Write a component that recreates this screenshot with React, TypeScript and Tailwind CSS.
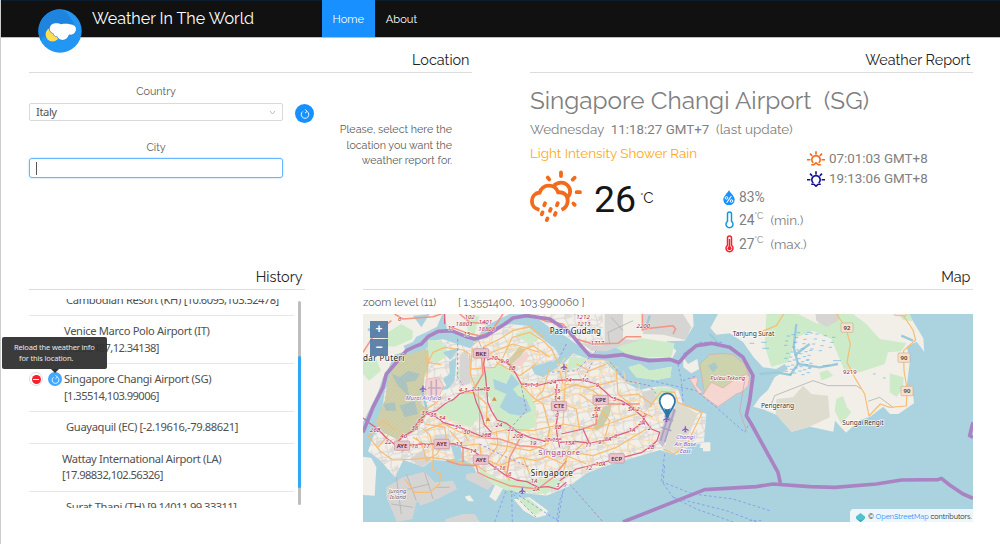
import React from "react";

const raleway = "font-['Raleway','Lato',sans-serif]";
const noto = "font-['Noto_Sans',sans-serif]";
const roboto = "font-['Roboto',sans-serif]";

function Logo() {
  return (
    <svg viewBox="0 0 44 44" className="h-11 w-11">
      <circle cx="22" cy="22" r="21.7" fill="#2196f3" />
      <path d="M22 .3 28 3 36 14 24 26 15 32 5 27 3 32A21.7 21.7 0 0 1 22 .3Z" fill="#1e84dd" />
      <circle cx="14.500" cy="25.500" r="6.900" fill="#ffdd55" />
      <path
        d="M16 14.500c3-.8 5.500 0 7 .7 4-.9 8-.5 10 .2 4 .3 5.600 3 4.800 6-1 3.400-3.800 4.800-6.800 4.200-1 3.400-3.400 5.400-6.500 5.400-2.700 0-4.300-1.600-5.200-3.400-2-.2-3.400-1.400-3.800-3.200-2.800-1-4.200-3-3.700-5.600.3-2.200 2-3.700 4.200-4.300Z"
        fill="#fff"
        stroke="#2089e4"
        strokeWidth="1.200"
        paintOrder="stroke"
      />
    </svg>
  );
}

function Reload({ size }: { size: number }) {
  return (
    <svg width={size} height={size} viewBox="0 0 12 12" fill="none" stroke="#fff" strokeWidth="1.100">
      <path d="M3.400 3A4.500 4.500 0 1 0 8.600 3" />
      <path d="M6.200.4 8.600 2.900 6 4.800" />
    </svg>
  );
}

function RainIcon() {
  return (
    <svg viewBox="0 0 52 52" className="h-[52px] w-[52px]" fill="none" stroke="#f26a1b" strokeWidth="3.800" strokeLinecap="round">
      <path d="M9.500 39.800C4.800 38.800 1.900 35.400 1.900 31.200c0-4.600 3.200-8.200 7.800-8.700a9.600 9.600 0 0 1 18.400-.2c6.500-.6 10.300 4.200 9.600 9.200-.6 4.400-3.600 7.300-6.200 8.300" strokeLinecap="butt" />
      <path d="M24 15.500c4-3.800 10-4 13.500-.2 4 4.200 3.500 9.600-1.500 13" strokeLinecap="butt" />
      <path d="M31 2.400v3.600M17.700 7.600l1.600 1.800M42.700 9.600l2-1.900M46.600 22.200h3.400M43.400 33.500l1.300 1.300" />
      <path d="M15 33.300l-.7 1.900M27.700 33.300l-.7 1.900M20.700 39l-.7 1.900M12.500 42.400l-.7 1.900M25.600 43l-.7 1.900M17.500 48.400l-.7 1.700" />
    </svg>
  );
}

function HorizonSun({ set = false }: { set?: boolean }) {
  return (
    <svg viewBox="0 0 18 17" className="h-[17px] w-[18px] shrink-0" fill="none" stroke={set ? "#0f0f90" : "#f26a1b"} strokeWidth="1.600">
      <path d="M0 8.800h3.400M14.600 8.800H18M9 .3v3.200M3 2.600l2.200 2.300M15 2.600l-2.200 2.300M6.300 12A4.200 4.200 0 1 1 11.700 12" />
      <path d={set ? "M4.200 13.200h2.600l2.200 2 2.200-2h2.600" : "M4.200 13.800h2.600l2.200-2 2.200 2h2.600"} />
    </svg>
  );
}

function Drop() {
  return (
    <svg viewBox="0 0 12 15" className="h-[15px] w-3">
      <path d="M6 .2C7.500 3 11.700 6.300 11.700 9.600a5.500 5.500 0 0 1-11.400 0C.3 6.300 4.500 3 6 .2Z" fill="#1890ff" />
      <path d="m8.300 6-4.600 6.800" stroke="#fff" strokeWidth="1.100" />
      <circle cx="3.500" cy="7.900" r="1.300" fill="none" stroke="#fff" />
      <circle cx="8.500" cy="11" r="1.300" fill="none" stroke="#fff" />
    </svg>
  );
}

function Thermo({ hot = false }: { hot?: boolean }) {
  const c = hot ? "#f5222d" : "#1296db";
  return (
    <svg viewBox="0 0 9 18" className="h-[18px] w-[9px]" fill="none" stroke={c} strokeWidth="1.500">
      <path d="M2.500 10.300V3a2 2 0 0 1 4 0v7.300a3.500 3.500 0 1 1-4 0Z" />
      {hot && <path d="M4.500 4v8" />}
      {hot && <circle cx="4.500" cy="13.200" r="2" fill={c} stroke="none" />}
    </svg>
  );
}

function Heading({ children }: { children: React.ReactNode }) {
  return (
    <h2 className={`${raleway} h-[27px] border-b border-[#dcdcdc] pr-[2.500px] text-right text-[14.400px] leading-[27px] text-[#222]`}>
      {children}
    </h2>
  );
}

const landPaths = [
  "M0 0H238L222 38 190 55 160 68 150 84 122 95 128 112 95 122 78 160 60 190 45 235 0 325Z",
  "M245 0 252 45 285 62 345 72 362 40 395 22 440 0Z",
  "M500 0 530 18 562 42 610 68 640 90 690 118 741 90 840 130 925 138 940 110 910 82 965 80 992 35 990 0Z",
  "M796 160 830 150 860 170 926 158 922 190 880 198 820 190Z",
  "M1065 0 1042 42 1060 62 1100 58 1140 84 1172 130 1200 160 1240 165 1265 150 1275 165 1235 190 1215 228 1191 250 1171 278 1200 286 1241 303 1286 353 1341 338 1411 353 1416 320 1449 356 1491 318 1521 308 1561 278 1581 300 1606 300 1653 268 1651 248 1631 218 1641 138 1631 98 1661 83 1684 113 1681 73 1651 23 1636 0Z",
  "M186 108 210 80 240 76 291 93 321 103 350 78 391 53 441 30 491 35 536 73 575 103 590 128 560 150 601 150 631 118 681 138 721 138 751 168 791 208 831 228 855 222 880 218 911 216 946 228 961 273 1030 300 1022 390 990 390 941 423 891 408 821 428 721 458 671 478 621 515 591 528 551 545 491 538 431 528 381 508 341 478 330 455 291 428 250 440 211 438 181 458 121 438 96 490 51 438 15 412 31 368 51 328 66 228 111 158 141 128Z",
  "M0 428 25 432 40 460 35 545 0 543Z",
  "M379 548 403 500 425 515 398 562Z",
  "M305 548 320 544 333 562 316 562Z",
  "M452 556 500 550 555 590 548 604 520 612 482 590Z",
  "M961 130 975 150 1003 135 1008 165 985 178 961 160Z",
  "M1015 385H1042V412H1020V402H1010Z",
];
const greens = [
  "M70 58 115 30 150 50 148 75 95 98 62 95Z",
  "M0 135 38 130 54 170 18 200 0 180Z",
  "M370 165 415 150 460 190 490 225 520 280 515 340 460 360 405 335 380 250 325 225 340 190Z",
  "M218 295 280 250 335 230 360 290 325 340 270 320Z",
  "M280 180 296 140 318 180 300 205Z",
  "M310 5 350 5 335 60 315 65Z",
  "M195 78 235 80 260 120 220 148 195 130Z",
  "M741 90 800 82 835 72 935 88 925 130 850 130 790 120Z",
  "M796 160 830 150 860 170 926 158 922 190 880 198 820 190Z",
  "M1210 0H1305L1365 30 1370 0H1470L1510 30 1550 75 1630 88 1615 112 1575 115 1565 150 1490 175 1445 170 1405 75 1350 50 1300 70 1275 145 1225 158 1205 95Z",
  "M1605 0H1640L1650 22 1620 18Z",
  "M1420 255 1440 245 1452 280 1465 295 1435 330 1415 290Z",
  "M1370 175 1395 168 1410 185 1375 200Z",
  "M1580 178 1622 190 1620 225 1600 248 1580 235Z",
  "M620 128 670 132 660 155 610 170Z",
  "M345 465 410 495 480 500 570 492 605 500 550 540 430 528 380 505Z",
  "M465 550 500 555 540 590 515 604 488 580Z",
  "M870 225 920 220 930 250 900 262 870 258Z",
  "M455 60 505 45 525 75 500 92Z",
];
const lakes = [
  "M390 195 430 210 445 180 470 210 450 225 465 245 490 255 505 290 475 305 440 300 410 280 430 240 395 225Z",
  "M258 145 280 130 275 200 255 225 225 230 250 215 240 195 260 180Z",
  "M262 392 290 390 300 430 278 440Z",
  "M240 115 290 100 262 138Z",
  "M505 160 565 140 590 155 540 190 515 180Z",
  "M150 5 200 0 175 40Z",
  "M120 260 155 270 140 300Z",
];
const industrial = [
  "M725 0H780V75L830 80 790 90 730 112 685 110 660 90 725 88Z",
  "M840 0H960L985 40 968 78 900 62 840 60Z",
  "M290 125 312 108 325 180 320 210 292 215Z",
  "M215 362 258 360 262 410 218 410Z",
  "M140 435 175 410 208 440 175 460Z",
  "M70 520 120 490 185 473 215 505 270 500 282 525 225 555 160 565 148 615 102 624 70 550Z",
  "M165 550 205 540 215 560 170 575Z",
  "M310 480 345 475 390 510 375 528 308 495Z",
  "M1358 0H1430L1425 20 1390 38 1360 20Z",
  "M250 615 300 600 335 600 350 624H245Z",
  "M835 235 870 228 880 255 850 290Z",
];
const orangeRoads = [
  "M15 365 50 410 90 438 145 436 205 430 270 440 300 447 340 452 370 475",
  "M180 345 200 362 210 400 210 470 232 478 230 510 200 535 155 535 125 495",
  "M180 320 186 288 215 270 240 250 M186 108 192 145 235 152",
  "M192 190 194 148 210 115 245 100 300 108 320 120 322 165 395 160 420 130 448 70 500 55 540 80 565 105 590 155",
  "M360 100 410 75 450 50 500 38 545 72 M375 120 450 90 530 115 M455 120 510 95 560 130 M400 145 470 185 520 150",
  "M340 230 322 180 328 100 M280 240 330 235 372 270 370 330",
  "M185 350 240 328 285 352 345 370 395 355 440 345 510 350 600 330 690 345 820 300",
  "M150 370 190 395 M185 330 245 340 250 370 222 420 190 440 180 400 160 370 M260 350 300 395 350 390 355 430 410 455 470 430 520 440 600 410 690 425 760 400 850 345",
  "M400 350 405 395 370 440 M440 350 430 410 400 450 M300 350 315 380 M560 340 555 390 500 410 450 400 380 388 M510 265 560 245 640 210 690 230",
  "M475 212 510 250 540 270 560 345 545 400 M600 270 640 285 650 350 M650 240 700 275 740 320 720 390 M690 230 735 265",
  "M590 170 600 210 680 220 760 200 M640 150 680 170 730 150 M610 150 600 330 M560 160 540 230 520 250",
  "M760 170 765 240 820 285 870 310 M770 245 825 240 865 270 M860 280 885 245 895 232 935 235 945 265 1018 295 975 385 935 420 900 405",
  "M600 420 670 450 M600 440 660 390 M535 420 600 450 M480 430 500 480 M420 460 440 500 M620 395 600 480",
  "M1191 55 1240 35 1262 0 M1420 0 1448 40 1462 90 1452 145 1475 190 1505 240 1518 306 1552 270 1580 280 1630 276 1632 225 1623 170 1622 110 1658 78 1650 48 1618 0",
  "M15 370 60 320 100 350 M45 400 75 365 M115 415 145 390",
];
const motorways = [
  "M0 312 20 328 45 345 70 372 95 391 135 394 190 389 240 391 272 389 300 400 328 408 350 425 370 442 395 460 425 482 460 498 492 503 525 520 555 518 585 526 610 505",
  "M95 391 120 368 150 350 166 322 190 300 220 290 245 270 272 256 292 238 330 228 370 225",
  "M362 100 366 125 362 150 368 190 372 235 374 265 385 290 402 318 430 328 460 352 500 370 540 380 595 375",
  "M372 138 395 130 440 152 458 178 475 210 530 213 580 200 620 197 660 198 700 210 725 232 745 250 775 260 800 275 835 305 865 345 890 355 882 380 865 395 835 416 800 425 700 450 640 465 590 500",
  "M582 210 578 255 585 300 579 335 582 360 590 400 M330 230 340 265 355 300 364 332 385 355 M190 300 215 306 240 325 290 340 320 352 350 365 385 360",
  "M590 385 635 382 680 387 722 380 760 365 800 352 835 330 850 300 M595 360 660 345 680 390 M245 0V30",
];
const coralRoads = [
  "M355 72 390 45 420 0 M260 38 315 58 350 65 400 50 M290 0 320 25 375 30 M95 0 120 15 210 8 235 0",
  "M0 115 35 60 85 20 M490 0 550 22 600 30 640 75 690 90 765 88 790 68 835 68 M838 0V50 M840 45 930 35 938 45 930 60",
  "M355 120 360 180 330 230 M350 370 410 375 470 395 530 400 600 430 M300 400 300 445",
  "M470 375 440 430 430 490 M250 440 290 452 340 455 345 475 375 490 440 515 525 525 570 490 610 440 M700 275 700 330 660 345 M735 270 830 270",
];
const greyRoads = [
  "M1225 270 1235 245 1350 200 1395 215 1480 215 1495 225 M1515 262 1550 250 1590 280",
  "M810 20 735 55 740 90 M745 10 780 50",
  "M100 490 115 600 M75 540 200 510 M130 480 160 560 M185 475 210 555 M85 570 150 580 M220 520 260 520",
  "M345 75 355 100 M345 225 350 300 350 370",
];
const boundaries = [
  "M0 355 30 280 60 220 70 180 105 140 130 110 155 98 175 90 195 68 225 52 265 50 310 68 335 75 370 65 425 30 450 12 490 5 560 15 620 55 645 85 680 125 725 128 780 122 815 132 860 140 920 136 948 146 970 120 1000 95 1045 88 1100 100 1140 130 1170 185 1160 260 1150 305 1165 330 1245 475 1252 507",
  "M780 624 1025 527 1180 518 1230 510 1340 518 1415 520 1540 510 1615 498 1725 497 1735 493 1760 513 1800 540 1830 553",
  "M1830 325 1820 365 1830 370",
];
const ferries = [
  "M395 624 430 528 M448 624 446 530 590 624 M440 530 520 610 M600 530 585 624 M610 510 590 560 580 624",
  "M905 420 895 500 930 550 1000 585 1110 624 M905 455 900 505 990 540 1110 555 1220 590 M930 550 1090 590 1180 624",
  "M865 200 1000 230 1060 280 1145 355 1155 335 M945 150 955 200 960 262 M960 200 1000 185 M960 120 1010 85 1080 85",
  "M1195 620H1160 M700 110 640 170 560 175",
];
const paths = [
  "M284 75V190L300 215 M741 145 790 200 860 215 880 240 M620 510 720 624 M688 145 665 190 M475 215 490 290 440 345 M610 90 590 130 M350 390 420 425 500 460",
];
const blueSwamp: number[][] = [];
for (let i = 0; i < 60; i++) {
  const x = 1262 + ((i * 37) % 80) + (i % 5 === 0 ? 70 : 0);
  const y = 55 + ((i * 53) % 130);
  blueSwamp.push([x, y]);
}
const roadNums: [number, number, string][] = [
  [110, 22, "6"], [320, 16, "102"], [303, 37, "18803"], [367, 29, "1401"], [371, 50, "18808"], [264, 49, "17"], [311, 67, "15"],
  [394, 139, "10"], [425, 148, "9-9"], [447, 167, "8B"], [300, 233, "4-3"], [338, 232, "2-1"], [370, 230, "1B"], [258, 264, "5"],
  [185, 304, "35"], [211, 308, "35"], [237, 319, "34"], [172, 326, "36"], [155, 347, "38"], [122, 371, "40"], [37, 353, "26B"], [76, 389, "22"],
  [155, 401, "18"], [190, 403, "17"], [288, 397, "13"], [285, 346, "31"], [311, 360, "30"], [369, 370, "26B"], [408, 339, "24"], [444, 352, "22"],
  [465, 373, "20B"], [510, 392, "19"], [330, 418, "14"], [410, 469, "8-18"], [440, 485, "6"], [513, 507, "1A"], [520, 530, "2A"], [585, 345, "8B"],
  [505, 220, "5-1-3"], [570, 211, "24"], [616, 204, "14"], [666, 205, "10"], [703, 220, "9"], [582, 236, "15"], [582, 257, "14"], [755, 261, "5"],
  [781, 275, "4"], [812, 290, "3A-2"], [836, 332, "2A"], [807, 353, "1A"], [758, 372, "6"], [735, 380, "8A"], [676, 398, "11"], [710, 391, "9"],
  [712, 456, "10A"], [677, 468, "12"], [864, 405, "2B"], [702, 292, "3B"], [695, 312, "3A"], [620, 394, "15A"], [843, 310, "2"], [859, 347, "2"],
  [564, 384, "27-15"], [662, 37, "1213"], [660, 16, "1212"], [703, 93, "1717"], [841, 43, "2200"], [582, 308, "0"], [585, 520, "3"],
];
const badges: [number, number, string][] = [
  [354, 118, "BKE"], [588, 276, "CTE"], [117, 395, "AYE"], [236, 390, "AYE"], [354, 437, "AYE"], [713, 258, "KPE"], [761, 433, "ECP"],
];
const shields: [number, number, string][] = [[1452, 41, "92"], [1623, 131, "90"], [1632, 231, "90"]];
const planes = [[180, 223], [478, 530], [603, 158], [910, 314], [967, 345]];

function Lines({ d, color, width, dash }: { d: string[]; color: string; width: number; dash?: string }) {
  return (
    <g fill="none" stroke={color} strokeWidth={width} strokeDasharray={dash} strokeLinejoin="round">
      {d.map((p) => <path key={p} d={p} />)}
    </g>
  );
}

function WorldMap() {
  return (
    <svg viewBox="0 0 1830 624" className="block h-[208px] w-[610px] bg-[#aad3df]" preserveAspectRatio="none">
      <defs>
        <pattern id="streets" width="64" height="58" patternUnits="userSpaceOnUse" patternTransform="rotate(-14)">
          <path d="M0 12 22 8 38 15 64 12M0 40 18 45 42 38 64 40M12 0 16 25 8 40 12 58M34 0 38 15 33 30 42 38 34 58M54 0 50 22 64 26M0 26 16 25 33 30 50 22" fill="none" stroke="#bbb8b5" strokeWidth="1.400" />
          <path d="M8 32h20v10H10zM42 4h12v14H43z" fill="#dedbd6" />
        </pattern>
        <pattern id="arterials" width="118" height="102" patternUnits="userSpaceOnUse" patternTransform="rotate(9)">
          <path d="M0 30 35 24 60 40 118 30M30 0 35 24 20 55 30 102M60 40 75 72 118 80M75 72 20 55M0 80 22 72M92 0 88 35 100 75" fill="none" stroke="#fad9a2" strokeWidth="3" />
        </pattern>
        <pattern id="hatch" width="9" height="9" patternUnits="userSpaceOnUse" patternTransform="rotate(45)">
          <path d="M0 0V9" stroke="#b9ae91" strokeWidth="1.500" />
        </pattern>
      </defs>
      <g fill="#f2efe9">{landPaths.map((p) => <path key={p} d={p} />)}</g>
      <path d={landPaths[5]} fill="url(#streets)" />
      <path d="M330 60 500 35 590 130 740 140 860 230 940 230 900 400 700 455 590 520 380 500 330 450 170 430 180 330 280 230 330 220Z" fill="url(#arterials)" />
      <path d="M500 0H720V100L690 115 610 65Z" fill="url(#streets)" />
      <g fill="#cdebc9">{greens.map((p) => <path key={p} d={p} />)}</g>
      <g fill="#d6d5d3">{industrial.map((p) => <path key={p} d={p} />)}</g>
      <g fill="#aad3df">{lakes.map((p) => <path key={p} d={p} />)}</g>
      <path d="M100 130 195 105 200 145 185 185 175 270 200 290 160 350 105 378 60 355 38 325 65 260 75 200Z" fill="#cfd0a9" />
      <path d="M85 178 110 190 135 170 170 180 158 200 130 205 140 250 105 215ZM60 270 95 265 100 290 70 290ZM110 275 155 260 165 300 125 310Z" fill="#abc5c3" />
      <path d="M100 130 195 105 200 145 185 185 175 270 200 290 160 350 105 378 60 355 38 325 65 260 75 200Z" fill="url(#hatch)" opacity=".7" />
      <path d="M190 195 225 190 242 215 230 245 215 265 185 250Z" fill="#f3d3d0" stroke="#e6aaa7" strokeWidth="2" />
      <path d="M205 200V255M220 195V250M195 222H235" stroke="#c3abc5" strokeWidth="5" />
      <path d="M427 148 470 98 488 108 445 160Z" fill="#d0cda8" />
      <path d="M445 150 490 112 500 125 475 155Z" fill="#f3d3d0" />
      <path d="M693 340 720 280 745 270 740 300 722 335 700 350Z" fill="#c9cda9" />
      <path d="M1240 255 1290 250 1320 215 1345 240 1395 245 1400 310 1340 338 1286 353 1238 300Z" fill="#dddccf" />
      <path d="M1018 195 1010 150 1040 122 1080 118 1110 122 1145 150 1160 190 1155 215 1120 220 1062 260 1022 225Z" fill="#cdd3ac" stroke="#d8aaa4" strokeWidth="2" />
      <path d="M980 195 1005 190 1000 215 1020 235 1008 240ZM1018 245 1045 205 1080 222 1110 200 1150 180 1160 190 1155 215 1140 232 1120 240 1065 278Z" fill="#f6d6d0" stroke="#e2aaa2" strokeWidth="2" />
      <path d="M1035 155 1055 145 1065 160 1050 175Z" fill="#aac9c9" />
      <path d="M940 260 1005 300 950 420 905 405Z" fill="#dddccf" />
      <path d="M885 385 920 270 940 290 900 400Z" fill="#c7c1d2" />
      <path d="M893 380 925 275M905 385 935 285M895 340 925 350M905 305 930 320" stroke="#aaa1c2" strokeWidth="5" />
      <Lines d={greyRoads} color="#b5b3b3" width={2.500} />
      <path d="M1190 180 1240 175 1282 183 1305 150 1292 100 1300 30M1305 150 1370 160 1425 150M1300 120 1340 90M1040 60 1080 100M1615 65 1650 80M860 5 850 40M175 220 195 300M15 45 40 60" fill="none" stroke="#9bcbd9" strokeWidth="7" />
      <g stroke="#66b2e8" strokeWidth="2">
        {blueSwamp.map(([x, y], i) => <path key={i} d={`M${x} ${y}h10`} />)}
        <path d="M1195 85h16M1198 103h20M1160 88h14M1380 155h20M1410 140h24M1530 180h8M1560 192h8" />
      </g>
      <Lines d={orangeRoads} color="#f8bd72" width={3.600} />
      <Lines d={coralRoads} color="#f39581" width={4.500} />
      <Lines d={motorways} color="#e0607f" width={3.800} />
      <Lines d={ferries} color="#7d8cee" width={2.200} dash="8 7" />
      <Lines d={paths} color="#a77fc4" width={2.500} dash="8 6" />
      <Lines d={boundaries} color="#aa84c2" width={11} />
      <path d="M1145 200 1130 290 1150 350" fill="none" stroke="#ce9fae" strokeWidth="2" />
      <g fill="#d38a4a"><path d="m387 260 7-12 7 12zM368 321l7-12 7 12z" /></g>
      <g className="font-['Noto_Sans',sans-serif] italic" fontSize="18.500" fill="#b1213c" stroke="#fff" strokeOpacity=".8" strokeWidth="3" paintOrder="stroke" textAnchor="middle">
        {roadNums.map(([x, y, t], i) => <text key={i} x={x} y={y}>{t}</text>)}
      </g>
      <g className="font-['Noto_Sans',sans-serif]" fontSize="18" fontWeight="600" textAnchor="middle">
        {badges.map(([x, y, t], i) => (
          <g key={i}>
            <rect x={x - 23} y={y - 14} width="46" height="28" rx="4" fill="#eac4ce" stroke="#c9909d" strokeWidth="2" />
            <text x={x} y={y + 7} fill="#5c2632">{t}</text>
          </g>
        ))}
        <rect x="1594" y="-10" width="36" height="15" rx="3" fill="#f5e1cd" stroke="#cfae91" strokeWidth="2" />
        {shields.map(([x, y, t], i) => (
          <g key={i}>
            <rect x={x - 18} y={y - 14} width="36" height="28" rx="3" fill="#f5e1cd" stroke="#cfae91" strokeWidth="2" />
            <text x={x} y={y + 7} fill="#5b3b2b">{t}</text>
          </g>
        ))}
      </g>
      <g fill="#8461c4">
        {planes.map(([x, y], i) => (
          <path key={i} d="M0-10 2-7V-2L10 3V6L2 3V7L5 10H-5L-2 7V3L-10 6V3L-2-2V-7Z" transform={`translate(${x} ${y})`} />
        ))}
      </g>
      <g className="font-['Noto_Sans',sans-serif]" stroke="#fff" strokeOpacity=".8" strokeWidth="4" paintOrder="stroke">
        <g fill="#222" fontSize="24">
          <text x="0" y="141" textLength="124">dar Puteri</text>
          <text x="560" y="60" textLength="154">Pasir Gudang</text>
          <text x="503" y="485" textLength="126">Singapore</text>
        </g>
        <g fill="#333" fontSize="20">
          <text x="1109" y="65" textLength="125">Tanjung Surat</text>
          <text x="1194" y="283" textLength="99">Pengerang</text>
          <text x="1438" y="332" textLength="124">Sungai Rengit</text>
        </g>
        <text x="526" y="422" fontSize="23" fill="#93498e" textLength="125">Singapore</text>
        <g fontSize="18" fontStyle="italic">
          <text x="128" y="259" fill="#8461c4" textLength="106">Murai Airfield</text>
          <g fill="#7b6178"><text x="77" y="537">Jurong</text><text x="80" y="556">Island</text></g>
          <g fill="#8461c4" textAnchor="middle"><text x="967" y="376">Changi</text><text x="967" y="397">Air Base</text><text x="967" y="418">East</text></g>
          <text x="1042" y="199" fill="#a5324a" textLength="105">Pulau Tekong</text>
        </g>
        <text x="1440" y="179" fontSize="18" fill="#a02335">9219</text>
      </g>
      <path d="M913 312C907 286 890 281 890 261A23 23 0 0 1 936 261C936 281 919 286 913 312Z" fill="#fff" stroke="#2978a5" strokeWidth="5" />
      <path d="M903 282Q913 290 923 282L913 312Z" fill="#2978a5" />
    </svg>
  );
}

function Row({ children, pad = "pl-[35px]" }: { children: React.ReactNode; pad?: string }) {
  return <li className={`border-b border-[#e8e8e8] py-[7px] leading-[16.500px] ${pad}`}>{children}</li>;
}

function Coords({ children }: { children: React.ReactNode }) {
  return <span className="tracking-[-0.58px]">{children}</span>;
}

export default function App() {
  return (
    <div className="flex h-[544px] w-[1000px] flex-col overflow-hidden border-l border-[#ccc] bg-white">
      <header className={`${raleway} flex h-[38px] shrink-0 border-b border-[#8fcaff] bg-[#111] text-white shadow-[inset_0_1px_0_#0b1d2c]`}>
        <div className="ml-[36.500px] mt-[8.500px] h-11 w-11 shrink-0">
          <Logo />
        </div>
        <div className="ml-[10.500px] w-[230px] whitespace-nowrap text-[16.100px] leading-[38px]">Weather In The World</div>
        <nav className="flex text-[11.100px] leading-[39px]">
          <a className="h-[37px] w-[52.500px] bg-[#1890ff] text-center">Home</a>
          <a className="h-[37px] w-[54px] text-center">About</a>
        </nav>
      </header>

      <main className="pl-7 pt-[8px]">
        <div className="flex h-[217px] gap-[58px]">
          <section className="w-[443px]">
            <Heading>Location</Heading>
            <div className={`${raleway} flex text-[10.800px] text-[#5a5a5a]`}>
              <div className="w-[254px] pt-[10px]">
                <div className="h-5 text-center leading-[17px]">Country</div>
                <div className={`${noto} flex h-[18px] items-center justify-between rounded-[2px] border border-[#d9d9d9] px-[6px] text-[11.300px] tracking-[-0.45px] text-[#555]`}>
                  Italy
                  <svg width="7" height="5" viewBox="0 0 7 5" fill="none" stroke="#bbb"><path d="m1 1 2.500 3L6 1" /></svg>
                </div>
                <div className="mt-[18px] h-[19px] text-center leading-[18px]">City</div>
                <div className="flex h-5 items-center rounded-[3px] border border-[#63b6ff] px-[6px] shadow-[0_0_2px_#8fcaff]">
                  <span className="h-[13px] w-px bg-[#555]" />
                </div>
              </div>
              <div className="ml-[12px] mt-[31px] flex h-[19px] w-[19px] items-center justify-center rounded-full bg-[#1890ff]">
                <Reload size={10} />
              </div>
              <p className="ml-auto mr-[20px] mt-[49px] w-[125px] text-right text-[10.700px] leading-[15.500px]">
                Please, select here the location you want the weather report for.
              </p>
            </div>
          </section>

          <section className={`${raleway} w-[443px] text-[#808080]`}>
            <Heading>Weather Report</Heading>
            <div className="mt-[13px] h-[29px] whitespace-pre text-[24.350px] leading-[29px]">Singapore Changi Airport  (SG)</div>
            <div className="mt-[6px] h-[16px] whitespace-pre text-[13.450px] leading-4">
              Wednesday  <span className={`${roboto} text-[13.350px]`}>11:18:27 GMT+7</span>  (last update)
            </div>
            <div className="flex">
              <div className="w-[193px]">
                <div className="mt-[8px] h-4 whitespace-nowrap text-[13.450px] leading-4 text-[#ffa911]">Light Intensity Shower Rain</div>
                <div className="mt-[9px] flex text-[#161616]">
                  <RainIcon />
                  <span className={`${roboto} ml-[12px] mt-[9px] text-[37.500px] leading-[40px]`}>26</span>
                  <span className="ml-[4px] mt-[17px] text-[15px] leading-[20px]"><span className="align-[2px] text-[12px]">°</span>C</span>
                </div>
              </div>
              <div>
                <div className={`${roboto} ml-[84px] mt-[12px] text-[13.400px] leading-[20px]`}>
                  <div className="flex h-[20px] items-center gap-[4px]"><HorizonSun />07:01:03 GMT+8</div>
                  <div className="flex h-[20px] items-center gap-[4px]"><HorizonSun set />19:13:06 GMT+8</div>
                </div>
                <div className={`${roboto} text-[13.800px]`}>
                  <div className="flex h-[16px] items-center gap-[4px]"><Drop />83%</div>
                  <div className="mt-[3px] flex h-[24px] items-center">
                    <span className="mr-[5px] pl-[2px]"><Thermo /></span>24
                    <span className={`${raleway} mb-[9px] text-[9.300px]`}>°C</span>
                    <span className={`${raleway} ml-[7px] text-[13.450px]`}>(min.)</span>
                  </div>
                  <div className="flex h-[24px] items-center">
                    <span className="mr-[5px] pl-[2px]"><Thermo hot /></span>27
                    <span className={`${raleway} mb-[9px] text-[9.300px]`}>°C</span>
                    <span className={`${raleway} ml-[7px] text-[13.450px]`}>(max.)</span>
                  </div>
                </div>
              </div>
            </div>
          </section>
        </div>

        <div className="flex gap-[58px]">
          <section className="w-[276px]">
            <Heading>History</Heading>
            <div className="relative mt-[9px] flex justify-between pr-[4px]">
              <div className="h-[209px] w-[265px] overflow-hidden">
                <ul className={`${noto} -mt-[14.500px] whitespace-nowrap text-[11.200px] tracking-[-0.34px] text-[#505050]`}>
                  <Row pad="pl-[37px]">Cambodian Resort (KH) <Coords>[10.6095,103.52478]</Coords></Row>
                  <Row>Venice Marco Polo Airport (IT)<br /><Coords>[45.50487,12.34138]</Coords></Row>
                  <Row pad="">
                    <div className="flex">
                      <span className="mt-[1px] flex h-[14px] w-[14px] items-center justify-center rounded-full border border-[#ddd]">
                        <span className="flex h-[9px] w-[9px] items-center justify-center rounded-full bg-[#f5222d]">
                          <span className="h-px w-[6px] bg-white" />
                        </span>
                      </span>
                      <span className="ml-[5px] mt-[1px] flex h-[14px] w-[14px] items-center justify-center rounded-full bg-[#40a9ff]">
                        <Reload size={9} />
                      </span>
                      <span className="ml-[2px]">Singapore Changi Airport (SG)<br /><Coords>[1.35514,103.99006]</Coords></span>
                    </div>
                  </Row>
                  <Row pad="pl-[37px]">Guayaquil (EC) <span className="tracking-[-0.42px]">[-2.19616,-79.88621]</span></Row>
                  <Row pad="pl-[33px]">Wattay International Airport (LA)<br /><Coords>[17.98832,102.56326]</Coords></Row>
                  <Row pad="pl-[37px]">Surat Thani (TH) <Coords>[9.14011,99.33311]</Coords></Row>
                </ul>
              </div>
              <div className="mt-[2px] h-[204px] w-[3px] rounded bg-[#bdbdbd] pt-[55px]">
                <div className="h-[132px] rounded bg-[#2fa9f3]" />
              </div>
              <div className={`${noto} absolute -left-[27px] top-[38px] flex h-[32px] w-[105px] items-center rounded-[2px] bg-[#303030]/95 pl-[12px] text-[7.500px] leading-[11px] tracking-[-0.16px] text-[#e8e8e8]`}>
                <span className="whitespace-nowrap">Reload the weather info<br /><span className="pl-[5px]">for this location.</span></span>
                <span className="absolute -bottom-[4px] left-[49px] border-x-4 border-t-4 border-x-transparent border-t-[#303030]" />
              </div>
            </div>
          </section>

          <section className="w-[610px]">
            <Heading>Map</Heading>
            <div className={`${raleway} h-[24px] whitespace-pre text-[10.950px] leading-[25px] text-[#606060]`}>
              <span className="inline-block w-[95px]">zoom level (11)</span>[ 1.3551400,  103.990060 ]
            </div>
            <div className="relative">
              <WorldMap />
              <div className="absolute left-[7px] top-[7px] flex flex-col gap-px font-['Liberation_Sans',sans-serif] text-[12px] font-bold leading-[16px] text-white">
                <span className="h-[17px] w-[18px] bg-[#567ca8]/95 text-center">+</span>
                <span className="h-[17px] w-[18px] bg-[#567ca8]/95 text-center">−</span>
              </div>
              <div className={`${raleway} absolute bottom-0 right-0 flex h-[13px] w-[123px] items-center gap-[3px] whitespace-nowrap rounded-tl bg-white/80 pl-[6px] pt-[3px] text-[7.200px] text-[#222]`}>
                <svg width="9" height="9" viewBox="0 0 9 9"><path d="m4.500 0 4.500 3.500v2L4.500 9 0 5.500v-2Z" fill="#4fc1cf" /><path d="m0 5.500 4.500 2.200L9 5.500 4.500 9Z" fill="#3496ad" /></svg>
                <span>© <span className="text-[#1890ff]">OpenStreetMap</span> contributors.</span>
              </div>
            </div>
          </section>
        </div>
      </main>
    </div>
  );
}
